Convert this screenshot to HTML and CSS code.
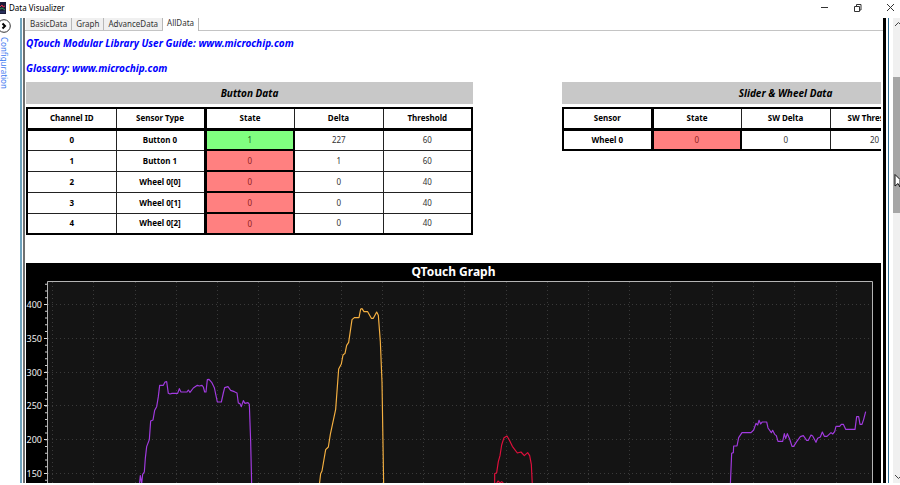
FILE: index.html
```html
<!DOCTYPE html>
<html lang="en">
<head>
<meta charset="utf-8">
<title>Data Visualizer</title>
<link rel="stylesheet" href="styles.css">
</head>
<body>
<header class="titlebar">
  <svg class="app-icon" viewBox="0 0 6 12" aria-hidden="true">
    <rect width="6" height="12" fill="#1c1c38"/>
    <path d="M0 5L2 3L3 5L5 4" stroke="#e0304a" fill="none"/>
    <path d="M0 7L2 6L5 8" stroke="#2c9a50" fill="none"/>
    <path d="M0 10H5" stroke="#33407c" fill="none"/>
  </svg>
  <h1 class="app-name">Data Visualizer</h1>
  <div class="window-controls">
    <button type="button" aria-label="Minimize"><svg viewBox="0 0 9 9"><path d="M1 3.5H8"/></svg></button>
    <button type="button" aria-label="Restore"><svg viewBox="0 0 9 9"><path d="M1.5 2.5H6.5V7.5H1.5ZM3.5 2.5V.5H8V6H6.5"/></svg></button>
    <button type="button" aria-label="Close"><svg viewBox="0 0 9 9"><path d="M1 0L8 7M8 0L1 7"/></svg></button>
  </div>
</header>
<div class="workspace">
  <aside class="rail">
    <button type="button" class="expand" aria-label="Expand"><svg viewBox="0 0 12 16"><circle cx="4" cy="8" r="6.3"/><path class="arrow" d="M2.5 5.5L5 8L2.5 10.5"/></svg></button>
    <span class="rail-label">Configuration</span>
  </aside>
  <main class="pane">
    <nav class="tabs">
      <button type="button">BasicData</button>
      <button type="button">Graph</button>
      <button type="button">AdvanceData</button>
      <button type="button" class="active">AllData</button>
    </nav>
    <div class="content">
      <div class="links">
        <a href="#guide">QTouch Modular Library User Guide: www.microchip.com</a>
        <a href="#glossary">Glossary: www.microchip.com</a>
      </div>
      <div class="tables">
        <section class="data">
          <h2>Button Data</h2>
          <table>
            <thead><tr><th>Channel ID</th><th>Sensor Type</th><th class="state">State</th><th>Delta</th><th>Threshold</th></tr></thead>
            <tbody>
              <tr><th>0</th><th>Button 0</th><td class="on">1</td><td>227</td><td>60</td></tr>
              <tr><th>1</th><th>Button 1</th><td class="off">0</td><td>1</td><td>60</td></tr>
              <tr><th>2</th><th>Wheel 0[0]</th><td class="off">0</td><td>0</td><td>40</td></tr>
              <tr><th>3</th><th>Wheel 0[1]</th><td class="off">0</td><td>0</td><td>40</td></tr>
              <tr><th>4</th><th>Wheel 0[2]</th><td class="off">0</td><td>0</td><td>40</td></tr>
            </tbody>
          </table>
        </section>
        <section class="data">
          <h2>Slider &amp; Wheel Data</h2>
          <table>
            <thead><tr><th>Sensor</th><th class="state">State</th><th>SW Delta</th><th>SW Threshold</th><th></th></tr></thead>
            <tbody><tr><th>Wheel 0</th><td class="off">0</td><td>0</td><td>20</td><td></td></tr></tbody>
          </table>
        </section>
      </div>
      <section class="graph">
        <h2>QTouch Graph</h2>
        <svg class="plot" viewBox="26 281 855 202" role="img" aria-label="QTouch Graph">
          <rect x="47" y="281" width="825" height="210" fill="#141414"/>
          <g class="grid">
            <path d="M48 304.5H872M48 338.5H872M48 372.5H872M48 405.5H872M48 439.5H872M48 473.5H872"/>
            <path d="M52.5 282V483M93.5 282V483M135.5 282V483M176.5 282V483M217.5 282V483M258.5 282V483M299.5 282V483M341.5 282V483M382.5 282V483M423.5 282V483M464.5 282V483M506.5 282V483M547.5 282V483M588.5 282V483M629.5 282V483M670.5 282V483M712.5 282V483M753.5 282V483M794.5 282V483M836.5 282V483"/>
          </g>
          <path class="ticks-minor" d="M46 283.8V483"/>
          <path class="ticks-major" d="M44 304.5H47M44 338.5H47M44 372.5H47M44 405.5H47M44 439.5H47M44 473.5H47"/>
          <path class="frame" d="M47.5 485V281.5H872.5V485"/>
          <g class="axis-labels">
            <text x="42" y="308">400</text><text x="42" y="342">350</text><text x="42" y="376">300</text>
            <text x="42" y="409">250</text><text x="42" y="443">200</text><text x="42" y="477">150</text>
          </g>
          <g class="series">
            <path stroke="#a23be0" transform="translate(0 255) scale(.33333)" d="M418 690L421 662L425 686L428 658L433 651L436 610L440 575L448 554L452 498L459 495L464 466L470 455L475 425L479 391H490L495 381L500 380L505 415L510 417L516 415H533L538 401L543 411H561L565 405L570 412L580 399L592 391L598 393L606 391L610 396L614 411H618L622 374L627 373L635 382L643 398L652 441H664L670 414L674 398L684 395L692 406L703 410L711 414L715 444L720 446L724 455L730 437L735 445L744 443L748 448L752 560L755 690"/>
            <path stroke="#f5b041" transform="translate(250 255) scale(.33333)" d="M208 690L212 656L216 648L227 584L235 576L241 538L257 463L266 342L274 327L279 300L285 295L290 271L296 262L306 194L313 188H327L332 162L336 161L342 170H353L364 190H370L380 171L385 181L391 260L396 380L401 690"/>
            <path stroke="#e0103c" transform="translate(250 255) scale(.33333)" d="M734 690V656L740 653L745 620L750 602L755 570L762 548L771 543L778 555L787 574L802 594L813 591L823 602L833 593L839 602L844 628L847 690M737 690L744 678L750 684L755 680L760 684"/>
            <path stroke="#a23be0" transform="translate(660 255) scale(.33333)" d="M211 690L215 595L220 593L221 573H231L236 548L246 533H273L281 525L288 505L293 510L297 496L302 507L307 501H320L324 519L334 533L338 526L344 538L349 542L354 559H368L373 536L377 551L382 536L389 552L396 574H401L410 560L421 545L430 542L440 556H445L453 540L458 543L468 562L473 550L481 546L487 531L493 544H501L513 533L518 537L524 530L528 514H539L544 508H550L557 523H585L590 485H596L600 508H606L611 493L617 470"/>
          </g>
        </svg>
      </section>
    </div>
  </main>
  <div class="scrollbar">
    <svg viewBox="0 0 7 12"><path d="M2 8L5.5 4.5L9 8"/></svg>
    <div class="track"><div class="thumb"></div></div>
    <svg viewBox="0 0 7 12"><path d="M2 4L5.5 7.5L9 4"/></svg>
    <svg class="pointer" viewBox="0 0 6 14"><path d="M1 .5V12L4 9.5L6 13V5.5Z"/></svg>
  </div>
</div>
</body>
</html>
```
FILE: styles.css
```css
* { box-sizing: border-box; }
body {
  margin: 0;
  height: 100vh;
  padding-bottom: 2px;
  display: flex;
  flex-direction: column;
  overflow: hidden;
  background: #fff;
  color: #000;
  font: 9px/12px "Noto Sans", "Open Sans", sans-serif;
}
button { font: inherit; color: inherit; border: 0; padding: 0; background: none; }
h1, h2 { margin: 0; }
svg { display: block; }

.titlebar { display: flex; flex: none; height: 18px; align-items: center; gap: 3px; padding-bottom: 2px; }
.app-icon { width: 6px; height: 12px; }
.app-name { font-size: 8px; font-weight: 400; line-height: 14px; }
.window-controls { display: flex; gap: 24px; margin-left: auto; padding-right: 5px; }
.window-controls svg { width: 9px; height: 9px; fill: none; stroke: #333; stroke-width: 1; }

.workspace { display: flex; flex: 1; min-height: 0; }
.rail { flex: none; width: 20px; display: flex; flex-direction: column; align-items: flex-start; }
.expand svg { width: 12px; height: 16px; fill: none; stroke: #333; }
.expand .arrow { stroke: #000; stroke-width: 2; }
.rail-label { writing-mode: vertical-rl; color: #3c78f0; font-size: 8px; line-height: 8px; padding-top: 3px; }

.pane {
  flex: 1;
  min-width: 0;
  display: flex;
  flex-direction: column;
  overflow: hidden;
  border-left: 2px solid #6fa3bd;
  border-right: 1px solid #2f6f94;
  padding: 0 2px 0 1px;
}
.tabs, .content { border-left: 2px solid #707070; border-right: 3px solid #000; padding-right: 2px; }
.tabs { flex: none; display: flex; height: 13px; padding-left: 1px; background: linear-gradient(#c4c4c4, #c4c4c4) bottom / 100% 1px no-repeat; }
.tabs button {
  height: 12px;
  padding: 0 4px;
  border-right: 1px solid #b8b8b8;
  background: #f0f0f0;
  color: #333;
  font-size: 8px;
  line-height: 12px;
}
.tabs .active { height: 13px; padding: 0 4px 3px; background: #fff; line-height: 10px; }

.content { flex: 1; min-height: 0; overflow: hidden; padding-left: 1px; }
.links { display: flex; flex-direction: column; align-items: flex-start; gap: 13px; padding: 6px 0 8px; }
.links a { color: #00f; font-size: 10px; font-weight: 700; font-style: italic; line-height: 12px; text-decoration: none; }

.tables { display: flex; gap: 89px; height: 181px; overflow: hidden; }
.data { flex: none; width: 447px; }
.data h2 { margin-bottom: 3px; background: #c8c8c8; font-size: 10px; font-style: italic; line-height: 22px; text-align: center; }
table { width: 100%; table-layout: fixed; border-collapse: collapse; border: 2px solid #000; }
th, td { height: 21px; padding: 0; border: 1px solid #222; font-size: 8px; line-height: 12px; text-align: center; }
td { color: #333; }
thead th { border-bottom: 3px solid #000; }
.on, .off { border: 2px solid #000; border-left-width: 3px; }
.state { border-left: 3px solid #000; }
.on { background: #80ff80; color: #206020; }
.off { background: #ff8080; color: #902020; }

.graph { background: #000; color: #fff; }
.graph h2 { font-size: 12px; line-height: 18px; text-align: center; }
.plot { width: 100%; height: auto; }
.plot path { fill: none; }
.grid { stroke: #3a3a3a; stroke-dasharray: 1 3; }
.ticks-minor { stroke: #ccc; stroke-width: 2; stroke-dasharray: 1 5.76; }
.ticks-major { stroke: #ddd; }
.frame { stroke: #b4b4b4; }
.axis-labels { fill: #f0f0f0; font-size: 9px; text-anchor: end; }
.series path { stroke-width: 3.5; stroke-linejoin: round; }

.scrollbar { position: relative; flex: none; width: 7px; margin-left: 4px; display: flex; flex-direction: column; background: #f0f0f0; }
.scrollbar svg { width: 7px; height: 12px; fill: none; stroke: #444; }
.track { flex: 1; padding-top: 47px; }
.thumb { height: 34%; min-height: 136px; background: #a6a6a6; }
.scrollbar .pointer { position: absolute; top: 156px; right: 0; width: 6px; height: 14px; fill: #fff; stroke: #111; }
```
